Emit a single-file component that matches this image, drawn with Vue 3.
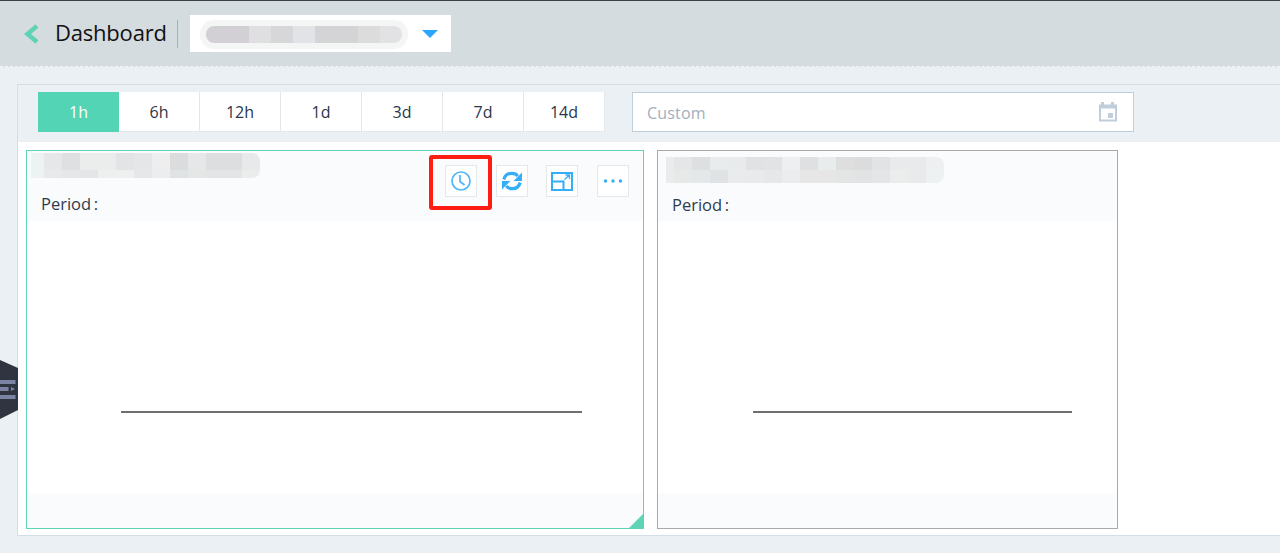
<template>
  <div class="page">
    <header class="topbar">
      <svg class="back" width="16" height="20" viewBox="0 0 16 20">
        <path d="M14 2 L4.500 10 L14 18" fill="none" stroke="#5fd3b5" stroke-width="4.500" />
      </svg>
      <span class="title">Dashboard</span>
      <span class="divider"></span>
      <div class="select">
        <div class="smear">
          <i v-for="(c, i) in selectCells" :key="i" :style="{ background: c }"></i>
        </div>
        <span class="caret"></span>
      </div>
    </header>

    <main class="panel">
      <div class="toolbar">
        <div class="tabs">
          <button v-for="(t, i) in ranges" :key="t" class="tab" :class="{ active: i === 0 }">{{ t }}</button>
        </div>
        <div class="custom">
          <span class="placeholder">Custom</span>
          <svg width="20" height="20" viewBox="0 0 20 20" fill="#c0cddb">
            <path d="M1 2.500h18v17H1z M3 6.500v11h14v-11z" fill-rule="evenodd" />
            <path d="M3 0h3v3H3z M13 0h3v3h-3z M10 11h5v5h-5z" />
          </svg>
        </div>
      </div>

      <div class="cards">
        <section class="card selected">
          <div class="card-head">
            <div class="mosaic first">
              <i v-for="(c, i) in firstCells" :key="i" :style="{ background: c }"></i>
            </div>
            <div class="period">Period&#8201;:</div>
            <div class="actions">
              <button class="act">
                <svg width="22" height="22" viewBox="0 0 22 22" fill="none" stroke="#4db6f8" stroke-width="1.700">
                  <circle cx="11" cy="11" r="9" />
                  <path d="M10 5v6.500l4.500 3.500" />
                </svg>
              </button>
              <button class="act">
                <svg width="22" height="22" viewBox="0 0 22 22">
                  <g>
                    <path d="M2.800 9.500C3.800 5.800 7 3.300 11 3.300c2.400 0 4.400 1 5.700 2.700" fill="none" stroke="#35aef8" stroke-width="3.200" />
                    <path d="M21 2.500V11H12.500z" fill="#35aef8" />
                  </g>
                  <g transform="rotate(180 11 11)">
                    <path d="M2.800 9.500C3.800 5.800 7 3.300 11 3.300c2.400 0 4.400 1 5.700 2.700" fill="none" stroke="#35aef8" stroke-width="3.200" />
                    <path d="M21 2.500V11H12.500z" fill="#35aef8" />
                  </g>
                </svg>
              </button>
              <button class="act">
                <svg width="22" height="20" viewBox="0 0 22 20" fill="none" stroke="#35aef8" stroke-width="2">
                  <path d="M1 2h20v17H1z" />
                  <path d="M1 10.500h11.500V19" />
                  <path d="M13.500 8.500l5-4.500M14.500 4h4v4" stroke-width="1.300" />
                </svg>
              </button>
              <button class="act">
                <svg width="20" height="4" viewBox="0 0 20 4" fill="#35aef8">
                  <circle cx="2.500" cy="2" r="1.700" />
                  <circle cx="10" cy="2" r="1.700" />
                  <circle cx="17.500" cy="2" r="1.700" />
                </svg>
              </button>
            </div>
          </div>
          <div class="chart wide"><div class="axis"></div></div>
          <div class="card-foot"></div>
          <span class="resize"></span>
          <span class="highlight"></span>
        </section>

        <section class="card narrow">
          <div class="card-head">
            <div class="mosaic second">
              <i v-for="(c, i) in secondCells" :key="i" :style="{ background: c }"></i>
            </div>
            <div class="period">Period&#8201;:</div>
          </div>
          <div class="chart slim"><div class="axis"></div></div>
          <div class="card-foot"></div>
        </section>
      </div>
    </main>

    <div class="side-handle">
      <svg width="18" height="60" viewBox="0 0 18 60">
        <path d="M0 0L18 8V50L0 59z" fill="#2f3440" />
        <path d="M0 20h15.500v4H0z M0 27h8.500v4H0z M0 35h15.500v4H0z" fill="#7d83a3" />
        <path d="M11 27l4 2-4 2z" fill="#7d83a3" />
      </svg>
    </div>
  </div>
</template>

<script setup>
const ranges = ['1h', '6h', '12h', '1d', '3d', '7d', '14d']

const selectCells = ['#d2d0d4', '#d2d0d4', '#dfdfe1', '#d7d6d9', '#e2e3e6', '#d4d3d6', '#d4d4d7', '#dcdcdd', '#e2e2e4']
// two rows of blur blocks, 18px each
const firstCells = [
  '#e6e7e8', '#dfe0e2', '#ebecec', '#ebecec', '#e3e4e5', '#e5e6e7', '#eeeeef', '#dbdcdd', '#e6e7e8', '#dddee0', '#dddee0', '#e8e9ea',
  '#e8e9ea', '#e6e7e8', '#e4e5e6', '#eeefef', '#eeefef', '#e6e7e8', '#ecedee', '#dfe3e4', '#e5e7e7', '#e2e4e5', '#e2e4e5', '#ebecec'
]
const secondCells = [
  '#e5e6e7', '#dddfe0', '#e8ecec', '#e9eaeb', '#e1e2e4', '#e2e3e5', '#eeeff0', '#dfe0e1', '#e9eced', '#dededf', '#dcdcdd', '#e2e3e5', '#e9eaeb', '#e9eaeb', '#eeeff0',
  '#e7e9e9', '#e4e8e8', '#dfe3e5', '#eaebec', '#e9eaeb', '#e6e7e8', '#ebeced', '#e5e6e5', '#e5e6e5', '#e3e4e4', '#e2e3e4', '#e4e5e6', '#ebecec', '#e9eaeb', '#edf1f2'
]
</script>

<style scoped>
.page {
  position: relative;
  height: 553px;
  overflow: hidden;
  background: #ebf0f4;
  font-family: "Open Sans", "Noto Sans", sans-serif;
}

.topbar {
  height: 67px;
  box-sizing: border-box;
  display: flex;
  align-items: center;
  padding: 0 0 0 23px;
  background: #d5dce0;
  border-top: 1px solid #3a3f4a;
  border-bottom: 1px dashed #f2f5f7;
}

.back {
  margin-right: 16px;
}

.title {
  margin-bottom: 3px;
  font-size: 22px;
  line-height: 30px;
  letter-spacing: -0.2px;
  color: #111;
}

.divider {
  width: 1px;
  height: 28px;
  margin: 0 12px 0 10px;
  background: #a9b0b5;
}

.select {
  width: 261px;
  height: 37px;
  display: flex;
  align-items: center;
  justify-content: space-between;
  padding: 0 13px 0 16px;
  box-sizing: border-box;
  background: #fff;
}

.smear {
  display: flex;
  width: 196px;
  height: 17px;
  margin-top: 2px;
  box-shadow: 0 0 0 6px #f4f5f5;
  border-radius: 8px;
  overflow: hidden;
}

.smear i {
  flex: 1;
}

.caret {
  width: 0;
  height: 0;
  border-left: 8px solid transparent;
  border-right: 8px solid transparent;
  border-top: 8px solid #2aa7fd;
}

.panel {
  margin: 17px 0 0 17px;
  height: 450px;
  background: #fff;
  border-top: 1px solid #d5dde6;
  border-left: 1px solid #d5dde6;
  border-bottom: 1px solid #d5dde6;
}

.toolbar {
  height: 57px;
  display: flex;
  align-items: flex-start;
  padding: 7px 0 0 20px;
  box-sizing: border-box;
  background: #ebf0f4;
}

.tabs {
  display: flex;
  height: 40px;
  background: #fff;
  border-bottom: 1px solid #e2e7ea;
  box-sizing: border-box;
}

.tab {
  width: 81px;
  height: 39px;
  padding: 0;
  border: 0;
  border-right: 1px solid #e2e7ea;
  background: #fff;
  font: 16px "Open Sans", "Noto Sans", sans-serif;
  color: #2a3648;
}

.tab.active {
  height: 40px;
  border-right: 0;
  background: #52d4b5;
  color: #fff;
}

.custom {
  width: 502px;
  height: 40px;
  margin-left: 27px;
  padding: 0 15px 0 14px;
  display: flex;
  align-items: center;
  justify-content: space-between;
  box-sizing: border-box;
  background: #fff;
  border: 1px solid #c0cddb;
  font-size: 16px;
  letter-spacing: 0.2px;
  color: #a3aebd;
}

.placeholder {
  padding-top: 2px;
}

.cards {
  display: flex;
  gap: 13px;
  padding: 8px 0 0 8px;
}

.card {
  position: relative;
  width: 618px;
  height: 379px;
  box-sizing: border-box;
  display: flex;
  flex-direction: column;
  border: 1px solid #a9a9a9;
  background: #fff;
}

.card.selected {
  border-color: #5fd3b5;
}

.card.narrow {
  width: 461px;
}

.card-head {
  position: relative;
  height: 70px;
  box-sizing: border-box;
  padding-top: 2px;
  background: #fafbfd;
}

.mosaic {
  display: grid;
  box-sizing: content-box;
  overflow: hidden;
}

.mosaic.first {
  width: 216px;
  margin-left: 17px;
  grid-template-columns: repeat(12, 18px);
  grid-template-rows: 17px 8px;
  border-radius: 0 8px 8px 0;
  box-shadow: -13px 0 0 #edf3f3;
}

.mosaic.second {
  width: 270px;
  margin: 4px 0 -4px 16px;
  grid-template-columns: repeat(15, 18px);
  grid-template-rows: 13px 13px;
  border-radius: 0 8px 8px 0;
  box-shadow: -8px 0 0 #e9ebec;
}

.period {
  margin: 16px 0 0 14px;
  font-size: 16.500px;
  line-height: 20px;
  color: #2f3b4c;
}

.actions {
  position: absolute;
  top: 14px;
  right: 14px;
  display: flex;
  gap: 18.670px;
}

.act {
  width: 32px;
  height: 32px;
  padding: 0;
  display: flex;
  align-items: center;
  justify-content: center;
  box-sizing: border-box;
  background: #fff;
  border: 1px solid #e6e7e8;
}

.chart {
  flex: 1;
  display: flex;
  align-items: flex-end;
  padding-bottom: 80px;
  box-sizing: border-box;
}

.axis {
  height: 2px;
  background: #6f6f6f;
}

.wide .axis {
  width: 461px;
  margin-left: 94px;
}

.slim .axis {
  width: 319px;
  margin-left: 95px;
}

.card-foot {
  height: 35px;
  background: #fafbfd;
}

.resize {
  position: absolute;
  right: 0;
  bottom: 0;
  width: 0;
  height: 0;
  border-left: 14px solid transparent;
  border-bottom: 14px solid #5fd3b5;
}

.highlight {
  position: absolute;
  top: 4px;
  left: 402px;
  width: 63px;
  height: 55px;
  box-sizing: border-box;
  border: 4px solid #ff1c10;
  border-radius: 3px;
}

.side-handle {
  position: absolute;
  top: 360px;
  left: 0;
  height: 60px;
}
</style>

<style>
html, body {
  margin: 0;
}

button {
  cursor: pointer;
}
</style>
